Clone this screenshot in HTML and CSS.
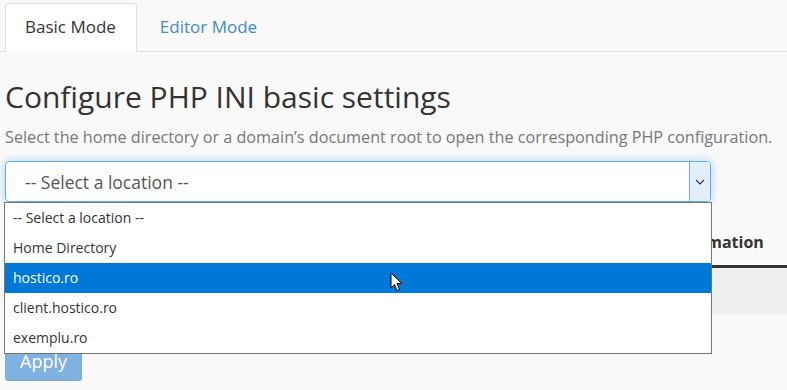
FILE: index.html
```html
<!DOCTYPE html>
<html lang="en">
<head>
<meta charset="utf-8">
<title>PHP INI basic settings</title>
<link rel="stylesheet" href="styles.css">
</head>
<body>
<div class="page">
  <nav class="tabs">
    <a class="tab active">Basic Mode</a>
    <a class="tab">Editor Mode</a>
  </nav>

  <h1 class="title">Configure PHP INI basic settings</h1>
  <p class="lead">Select the home directory or a domain’s document root to open the corresponding PHP configuration.</p>

  <div class="select-wrap">
    <div class="select">
      <span class="select-text">-- Select a location --</span>
      <span class="select-arrow">
        <svg width="10" height="6" viewBox="0 0 10 6"><path d="M1 1 L5 5 L9 1" fill="none" stroke="#333" stroke-width="1.1"/></svg>
      </span>
    </div>
    <ul class="dropdown">
      <li class="option">-- Select a location --</li>
      <li class="option">Home Directory</li>
      <li class="option selected">hostico.ro</li>
      <li class="option">client.hostico.ro</li>
      <li class="option">exemplu.ro</li>
    </ul>
    <svg class="cursor" width="14" height="20" viewBox="0 0 14 20"><path d="M1 1 L1 16 L4.5 12.5 L7 18.5 L9.5 17.5 L7 11.5 L12 11.5 Z" fill="#fff" stroke="#000" stroke-width="1" stroke-linejoin="round"/></svg>
  </div>

  <div class="table">
    <div class="thead">
      <div class="th">Directive</div>
      <div class="th">Setting</div>
      <div class="th">Information</div>
    </div>
    <div class="trow"></div>
  </div>

  <button class="btn" disabled>Apply</button>
</div>
</body>
</html>
```

FILE: styles.css
```css
html, body {
  margin: 0;
  padding: 0;
}
body {
  background: #f9f9f9;
  font-family: "Open Sans", "Noto Sans", sans-serif;
  color: #333;
  overflow: hidden;
}
.page {
  padding: 3px 0 0 5px;
}
.tabs {
  display: flex;
  border-bottom: 1px solid #dddddd;
  margin-left: -5px;
  padding-left: 5px;
}
.tab {
  display: block;
  padding: 11px 20px 12px 19px;
  font-size: 17px;
  line-height: 24px;
  border: 1px solid transparent;
  border-radius: 4px 4px 0 0;
  margin-bottom: -1px;
  color: #428bca;
  margin-right: 3px;
}
.tab.active {
  background: #fff;
  border-color: #dddddd;
  border-bottom-color: #fff;
  color: #333;
}
.title {
  margin: 29px 0 0 0;
  font-size: 30px;
  font-weight: 400;
  line-height: 32px;
  color: #333;
}
.lead {
  margin: 14px 0 0 0;
  font-size: 16.2px;
  line-height: 20px;
  color: #777;
}
.select-wrap {
  position: relative;
  margin-top: 14px;
  width: 706px;
}
.select {
  display: flex;
  align-items: stretch;
  height: 41px;
  box-sizing: border-box;
  border: 1px solid #66afe9;
  border-radius: 4px;
  background: #fff;
  box-shadow: 0 0 8px rgba(102, 175, 233, 0.6);
  overflow: hidden;
}
.select-text {
  flex: 1;
  display: flex;
  align-items: center;
  padding-left: 19px;
  font-size: 17.5px;
  color: #555;
}
.select-arrow {
  width: 20px;
  display: flex;
  align-items: center;
  justify-content: center;
  background: #e2eefb;
  border-left: 1px solid #66afe9;
}
.dropdown {
  position: absolute;
  z-index: 5;
  left: -1px;
  top: 41px;
  width: 706px;
  margin: 0;
  padding: 0;
  list-style: none;
  background: #fff;
  border: 1px solid #767676;
}
.option {
  height: 30px;
  line-height: 30px;
  padding-left: 8px;
  font-size: 14px;
  color: #333;
}
.option.selected {
  background: #0078d7;
  color: #fff;
}
.cursor {
  position: absolute;
  z-index: 6;
  left: 385px;
  top: 111px;
}
.table {
  margin-top: 18px;
}
.thead {
  display: grid;
  grid-template-columns: 1fr 1fr 128px;
  border-bottom: 3px solid #333;
}
.th {
  padding: 11px 8px 12px 8px;
  font-size: 16px;
  line-height: 22px;
  font-weight: 700;
  color: #333;
}
.trow {
  height: 46px;
  background: #efefef;
}
.btn {
  display: block;
  margin-top: 28px;
  padding: 6px 14px;
  font-family: "Open Sans", "Noto Sans", sans-serif;
  font-size: 18px;
  line-height: 25px;
  color: #fff;
  background: #81b1de;
  border: 1px solid #76a8d9;
  border-radius: 3px;
}
```
